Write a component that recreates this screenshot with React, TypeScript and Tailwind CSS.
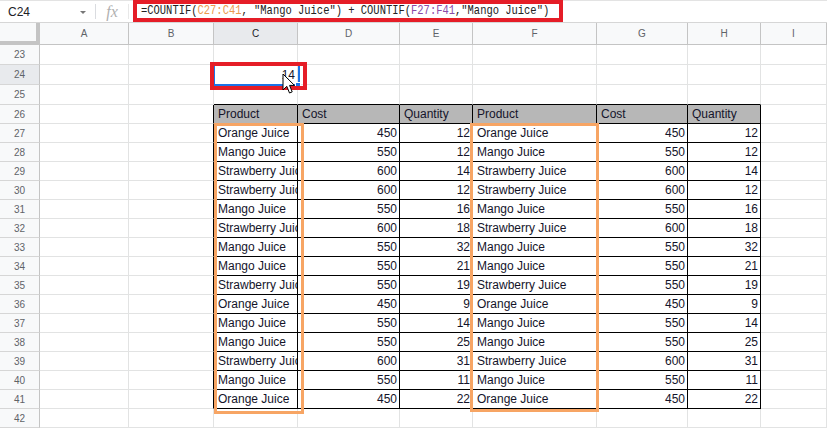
import React from "react";

const data: [string, number, number][] = [
  ["Orange Juice", 450, 12],
  ["Mango Juice", 550, 12],
  ["Strawberry Juice", 600, 14],
  ["Strawberry Juice", 600, 12],
  ["Mango Juice", 550, 16],
  ["Strawberry Juice", 600, 18],
  ["Mango Juice", 550, 32],
  ["Mango Juice", 550, 21],
  ["Strawberry Juice", 550, 19],
  ["Orange Juice", 450, 9],
  ["Mango Juice", 550, 14],
  ["Mango Juice", 550, 25],
  ["Strawberry Juice", 600, 31],
  ["Mango Juice", 550, 11],
  ["Orange Juice", 450, 22],
];

const COLS = "grid grid-cols-[40px_89px_85px_84px_102px_73px_124px_91px_73px_66px]";
const letters = ["A", "B", "C", "D", "E", "F", "G", "H", "I"];

function rowHeightCls(r: number) {
  if (r <= 25) return "h-[20px]";
  return "h-[19px]";
}

function cellBorder(r: number, c: number) {
  const inTable = r >= 26 && r <= 41 && c >= 3 && c <= 8;
  if (inTable) return "border-r border-b border-r-black border-b-black";
  if (r === 25 && c >= 3 && c <= 8) return "border-r border-b border-r-[#e2e3e3] border-b-black";
  if (c === 2 && r >= 26 && r <= 41) return "border-r border-b border-r-black border-b-[#e2e3e3]";
  return "border-r border-b border-r-[#e2e3e3] border-b-[#e2e3e3]";
}

function cellContent(r: number, c: number): { text: string; align: "l" | "r" } | null {
  if (r === 24 && c === 3) return { text: "14", align: "r" };
  if (r === 26) {
    const h = ["Product", "Cost", "Quantity", "Product", "Cost", "Quantity"];
    if (c >= 3 && c <= 8) return { text: h[c - 3], align: "l" };
  }
  if (r >= 27 && r <= 41) {
    const d = data[r - 27];
    if (c === 3 || c === 6) return { text: d[0], align: "l" };
    if (c === 4 || c === 7) return { text: String(d[1]), align: "r" };
    if (c === 5 || c === 8) return { text: String(d[2]), align: "r" };
  }
  return null;
}

function Row({ r }: { r: number }) {
  const cells = [];
  cells.push(
    <div
      key="h"
      className={
        "flex items-center justify-center border-r border-b border-r-[#c4c4c4] border-b-[#d6d6d6] text-[10px] text-[#5f6368] " +
        (r === 24 ? "bg-[#e8eaed]" : "bg-[#f8f9fa]")
      }
    >
      {r}
    </div>
  );
  for (let c = 1; c <= 9; c++) {
    const content = cellContent(r, c);
    const header = r === 26 && c >= 3 && c <= 8;
    cells.push(
      <div
        key={c}
        className={
          "flex items-end overflow-hidden whitespace-nowrap text-[12px] leading-[15px] pb-[1px] text-[#14142a] " +
          cellBorder(r, c) +
          (header ? " bg-[#b7b7b7]" : "") +
          (content && content.align === "r" ? " justify-end pr-[2px]" : " pl-[4px]")
        }
      >
        {content ? content.text : null}
      </div>
    );
  }
  return <div className={COLS + " " + rowHeightCls(r)}>{cells}</div>;
}

export default function App() {
  const rows: number[] = [];
  for (let r = 23; r <= 42; r++) rows.push(r);
  return (
    <div className="relative w-[827px] h-[429px] overflow-hidden bg-white font-['Liberation_Sans',Arial,sans-serif]">
      {/* formula bar */}
      <div className="flex h-[23px] border-t border-b border-t-[#e3e3e3] border-b-[#d6d6d6] bg-white">
        <div className="flex w-[95px] items-center justify-between pl-[8px] pr-[9px]">
          <span className="text-[12px] text-[#202124]">C24</span>
          <span className="mt-[1px] h-0 w-0 border-l-[3px] border-r-[3px] border-t-[3px] border-l-transparent border-r-transparent border-t-[#777]" />
        </div>
        <div className="my-[3px] w-px bg-[#dadce0]" />
        <div className="flex w-[32px] items-center justify-center">
          <span className="font-['Liberation_Serif',serif] text-[16px] italic leading-none text-[#b0b0b0]">fx</span>
        </div>
        <div className="my-[3px] w-px bg-[#e8e8e8]" />
        <div className="-mt-px ml-[4px] flex h-[22px] w-[430px] items-center overflow-hidden border-4 border-[#e51d27] pl-[4px]">
          <div className="flex shrink-0 origin-left scale-x-[0.805] whitespace-nowrap font-['Liberation_Mono',monospace] text-[13px] leading-[14px] text-[#222]">
            <span>=COUNTIF(</span>
            <span className="text-[#eb9a4e]">C27:C41</span>
            <span className="whitespace-pre">, "Mango Juice") + COUNTIF(</span>
            <span className="text-[#8a4aa8]">F27:F41</span>
            <span className="whitespace-pre">,"Mango Juice")</span>
          </div>
        </div>
      </div>

      {/* column headers */}
      <div className={COLS + " h-[22px]"}>
        <div className="border-r-4 border-b-4 border-[#c4c4c4] bg-[#f8f9fa]" />
        {letters.map((l) => (
          <div
            key={l}
            className={
              "flex items-center justify-center border-r border-b border-r-[#c4c4c4] border-b-[#c4c4c4] text-[10px] " +
              (l === "C" ? "bg-[#e8eaed] text-[#202124]" : "bg-[#f8f9fa] text-[#5f6368]")
            }
          >
            {l}
          </div>
        ))}
      </div>

      {rows.map((r) => (
        <Row key={r} r={r} />
      ))}

      {/* selection */}
      <div className="absolute left-[213px] top-[64px] h-[22px] w-[87px] border-2 border-[#1a73e8]" />
      <div className="absolute left-[295px] top-[82px] h-[6px] w-[6px] border border-white bg-[#1a73e8]" />
      {/* red annotation around C24 */}
      <div className="absolute left-[210px] top-[62px] h-[28px] w-[97px] border-4 border-[#e51d27]" />
      {/* orange range boxes */}
      <div className="absolute left-[214px] top-[123px] h-[291px] w-[90px] border-[3px] border-[#f7a564]" />
      <div className="absolute left-[470px] top-[123px] h-[289px] w-[129px] border-[3px] border-[#f7a564]" />
      {/* mouse cursor */}
      <svg className="absolute left-[282px] top-[73px]" width="14" height="24" viewBox="0 0 14 24">
        <path d="M1 1 L1 17 L4.8 13.3 L7.5 20 L10.2 18.9 L7.6 12.4 L12.5 12.4 Z" fill="white" stroke="black" strokeWidth="1" strokeLinejoin="round" />
      </svg>
    </div>
  );
}
